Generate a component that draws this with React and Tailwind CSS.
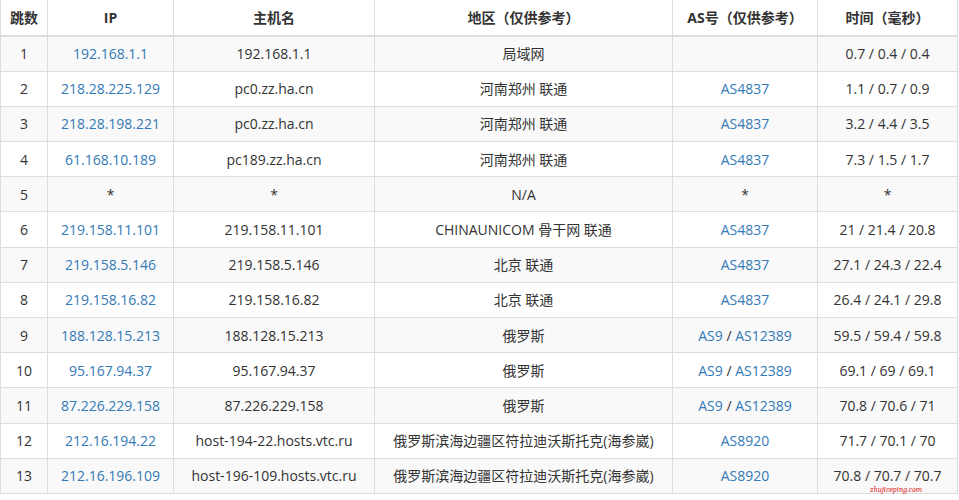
const rows=[
["1","192.168.1.1","192.168.1.1","局域网",[],"0.7 / 0.4 / 0.4"],
["2","218.28.225.129","pc0.zz.ha.cn","河南郑州 联通",["AS4837"],"1.1 / 0.7 / 0.9"],
["3","218.28.198.221","pc0.zz.ha.cn","河南郑州 联通",["AS4837"],"3.2 / 4.4 / 3.5"],
["4","61.168.10.189","pc189.zz.ha.cn","河南郑州 联通",["AS4837"],"7.3 / 1.5 / 1.7"],
["5","*","*","N/A",null,"*"],
["6","219.158.11.101","219.158.11.101","CHINAUNICOM 骨干网 联通",["AS4837"],"21 / 21.4 / 20.8"],
["7","219.158.5.146","219.158.5.146","北京 联通",["AS4837"],"27.1 / 24.3 / 22.4"],
["8","219.158.16.82","219.158.16.82","北京 联通",["AS4837"],"26.4 / 24.1 / 29.8"],
["9","188.128.15.213","188.128.15.213","俄罗斯",["AS9","AS12389"],"59.5 / 59.4 / 59.8"],
["10","95.167.94.37","95.167.94.37","俄罗斯",["AS9","AS12389"],"69.1 / 69 / 69.1"],
["11","87.226.229.158","87.226.229.158","俄罗斯",["AS9","AS12389"],"70.8 / 70.6 / 71"],
["12","212.16.194.22","host-194-22.hosts.vtc.ru","俄罗斯滨海边疆区符拉迪沃斯托克(海参崴)",["AS8920"],"71.7 / 70.1 / 70"],
["13","212.16.196.109","host-196-109.hosts.vtc.ru","俄罗斯滨海边疆区符拉迪沃斯托克(海参崴)",["AS8920"],"70.8 / 70.7 / 70.7"],
];
const W=["w-[47px]","w-[126px]","w-[201px]","w-[298px]","w-[145px]","w-[140px]"];
const heads=["跳数","IP","主机名","地区（仅供参考）","AS号（仅供参考）","时间（毫秒）"];
export default function App(){
return <div className="relative w-[959px] h-[500px] bg-white text-[14px] text-[#333]" style={{fontFamily:'"Open Sans","Noto Sans CJK SC",sans-serif'}}>
<table className="border-collapse table-fixed w-[957px]">
<thead><tr className="h-[36px]">{heads.map((h,i)=><th key={i} className={`${W[i]} border border-[#ddd] border-b-2 border-t-0 font-bold text-center p-0`}>{h}</th>)}</tr></thead>
<tbody>{rows.map((r,k)=><tr key={k} className={`h-[35.2px] ${k%2==0?"bg-[#f9f9f9]":"bg-white"}`}>
<td className="border border-[#ddd] text-center p-0">{r[0]}</td>
<td className={`border border-[#ddd] text-center p-0 ${r[1]==="*"?"":"text-[#337ab7]"}`}>{r[1]}</td>
<td className="border border-[#ddd] text-center p-0">{r[2]}</td>
<td className="border border-[#ddd] text-center p-0">{r[3]}</td>
<td className="border border-[#ddd] text-center p-0">{r[4]===null?"*":r[4].map((a,j)=><span key={j}>{j>0&&" / "}<span className="text-[#337ab7]">{a}</span></span>)}</td>
<td className="border border-[#ddd] text-center p-0">{r[5]}</td>
</tr>)}</tbody></table>
<div className="absolute left-[870px] top-[484px] text-[8px] italic text-[#d33] font-serif">zhujiceping.com</div>
</div>}
